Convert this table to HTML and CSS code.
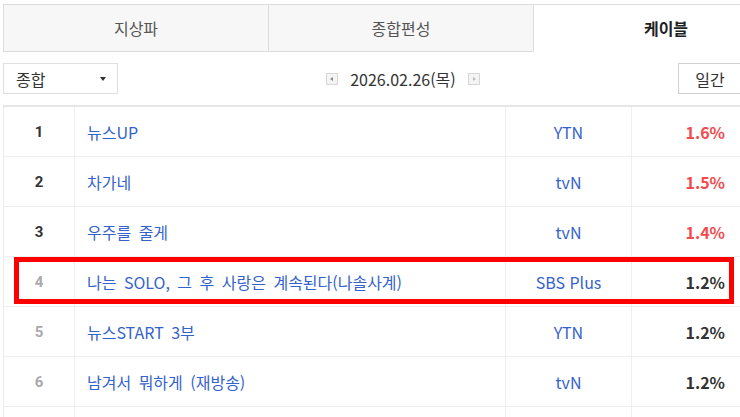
FILE: index.html
```html
<!DOCTYPE html>
<html lang="ko">
<head>
<meta charset="utf-8">
<title>시청률 - 케이블</title>
<link rel="stylesheet" href="styles.css">
</head>
<body>
<div class="wrap">
  <div class="tabs">
    <div class="tab">지상파</div>
    <div class="tab">종합편성</div>
    <div class="tab active">케이블</div>
  </div>

  <div class="toolbar">
    <div class="select">
      <span>종합</span>
      <span class="caret"></span>
    </div>
    <div class="datenav">
      <span class="navbtn prev"></span>
      <span class="date">2026.02.26(목)</span>
      <span class="navbtn next"></span>
    </div>
    <div class="periods">
      <span class="pbtn">일간</span>
      <span class="pbtn"></span>
    </div>
  </div>

  <table class="rank">
    <colgroup>
      <col class="c-rank"><col class="c-title"><col class="c-ch"><col class="c-rate">
    </colgroup>
    <tbody>
      <tr class="top"><td class="num">1</td><td class="title">뉴스UP</td><td class="ch">YTN</td><td class="rate">1.6%</td></tr>
      <tr class="top"><td class="num">2</td><td class="title">차가네</td><td class="ch">tvN</td><td class="rate">1.5%</td></tr>
      <tr class="top"><td class="num">3</td><td class="title">우주를 줄게</td><td class="ch">tvN</td><td class="rate">1.4%</td></tr>
      <tr><td class="num">4</td><td class="title">나는 SOLO, 그 후 사랑은 계속된다(나솔사계)</td><td class="ch">SBS Plus</td><td class="rate">1.2%</td></tr>
      <tr><td class="num">5</td><td class="title">뉴스START 3부</td><td class="ch">YTN</td><td class="rate">1.2%</td></tr>
      <tr><td class="num">6</td><td class="title">남겨서 뭐하게 (재방송)</td><td class="ch">tvN</td><td class="rate">1.2%</td></tr>
      <tr><td class="num"></td><td class="title"></td><td class="ch"></td><td class="rate"></td></tr>
    </tbody>
  </table>

  <div class="highlight"></div>
</div>
</body>
</html>
```

FILE: styles.css
```css
html, body {
  margin: 0;
  padding: 0;
  background: #fff;
  overflow: hidden;
}

body {
  font-family: "Noto Sans CJK KR", "Noto Sans", sans-serif;
  color: #333;
}

.wrap {
  position: relative;
  width: 800px;
  margin: 4px 0 0 3px;
}

/* Tabs */
.tabs {
  display: flex;
  border-top: 1px solid #dcdcdc;
}

.tab {
  box-sizing: border-box;
  width: 265px;
  height: 47px;
  display: flex;
  align-items: center;
  justify-content: center;
  background: #f7f7f7;
  border-left: 1px solid #dcdcdc;
  border-bottom: 1px solid #dcdcdc;
  font-size: 16px;
  color: #555;
}

.tab.active {
  background: #fff;
  border-bottom-color: transparent;
  font-weight: bold;
  color: #222;
}

/* Toolbar */
.toolbar {
  display: grid;
  grid-template-columns: 1fr auto 1fr;
  align-items: center;
  margin-top: 11px;
  height: 31px;
}

.select {
  box-sizing: border-box;
  width: 115px;
  height: 31px;
  border: 1px solid #e0e0e0;
  display: flex;
  align-items: center;
  justify-content: space-between;
  padding: 0 11px 0 12px;
  font-size: 16px;
  color: #333;
}

.caret {
  width: 0;
  height: 0;
  border-left: 3px solid transparent;
  border-right: 3px solid transparent;
  border-top: 4px solid #333;
}

.datenav {
  display: flex;
  align-items: center;
  gap: 12px;
  font-size: 16px;
  color: #333;
}

.navbtn {
  box-sizing: border-box;
  width: 12px;
  height: 12px;
  border: 1px solid #d6d6d6;
  background: #f4f4f4;
  position: relative;
}

.navbtn::after {
  content: "";
  position: absolute;
  top: 3px;
  width: 0;
  height: 0;
  border-top: 2.5px solid transparent;
  border-bottom: 2.5px solid transparent;
}

.navbtn.prev::after {
  left: 3px;
  border-right: 3px solid #888;
}

.navbtn.next::after {
  left: 4px;
  border-left: 3px solid #bbb;
}

.periods {
  justify-self: end;
  display: flex;
  gap: 2px;
  margin-right: -5px;
}

.pbtn {
  box-sizing: border-box;
  width: 64px;
  height: 31px;
  border: 1px solid #d0d0d0;
  display: flex;
  align-items: center;
  justify-content: center;
  font-size: 16px;
  color: #333;
}

/* Ranking table */
.rank {
  margin-top: 11px;
  width: 738px;
  table-layout: fixed;
  border-collapse: collapse;
  border-top: 2px solid #e6e6e6;
  border-left: 1px solid #ececec;
}

.c-rank { width: 71px; }
.c-title { width: 431px; }
.c-ch { width: 126px; }
.c-rate { width: 110px; }

.rank td {
  height: 49px;
  padding: 0;
  border-bottom: 1px solid #efefef;
  border-right: 1px solid #efefef;
  font-size: 16px;
  white-space: nowrap;
}

.rank td.num {
  text-align: center;
  font-family: Roboto, "Noto Sans", sans-serif;
  font-weight: bold;
  font-size: 15px;
  color: #aaa;
}

.rank tr.top td.num {
  color: #333;
}

.rank td.title {
  padding-left: 12px;
  color: #3462cc;
  word-spacing: 3px;
}

.rank td.ch {
  text-align: center;
  color: #3462cc;
}

.rank td.rate {
  text-align: right;
  padding-right: 16px;
  font-weight: bold;
  color: #333;
}

.rank tr.top td.rate {
  color: #f24a4e;
}

/* Annotation overlay */
.highlight {
  position: absolute;
  left: 11px;
  top: 253px;
  width: 720px;
  height: 47px;
  box-sizing: border-box;
  border: 5px solid #ff0000;
  pointer-events: none;
}
```
